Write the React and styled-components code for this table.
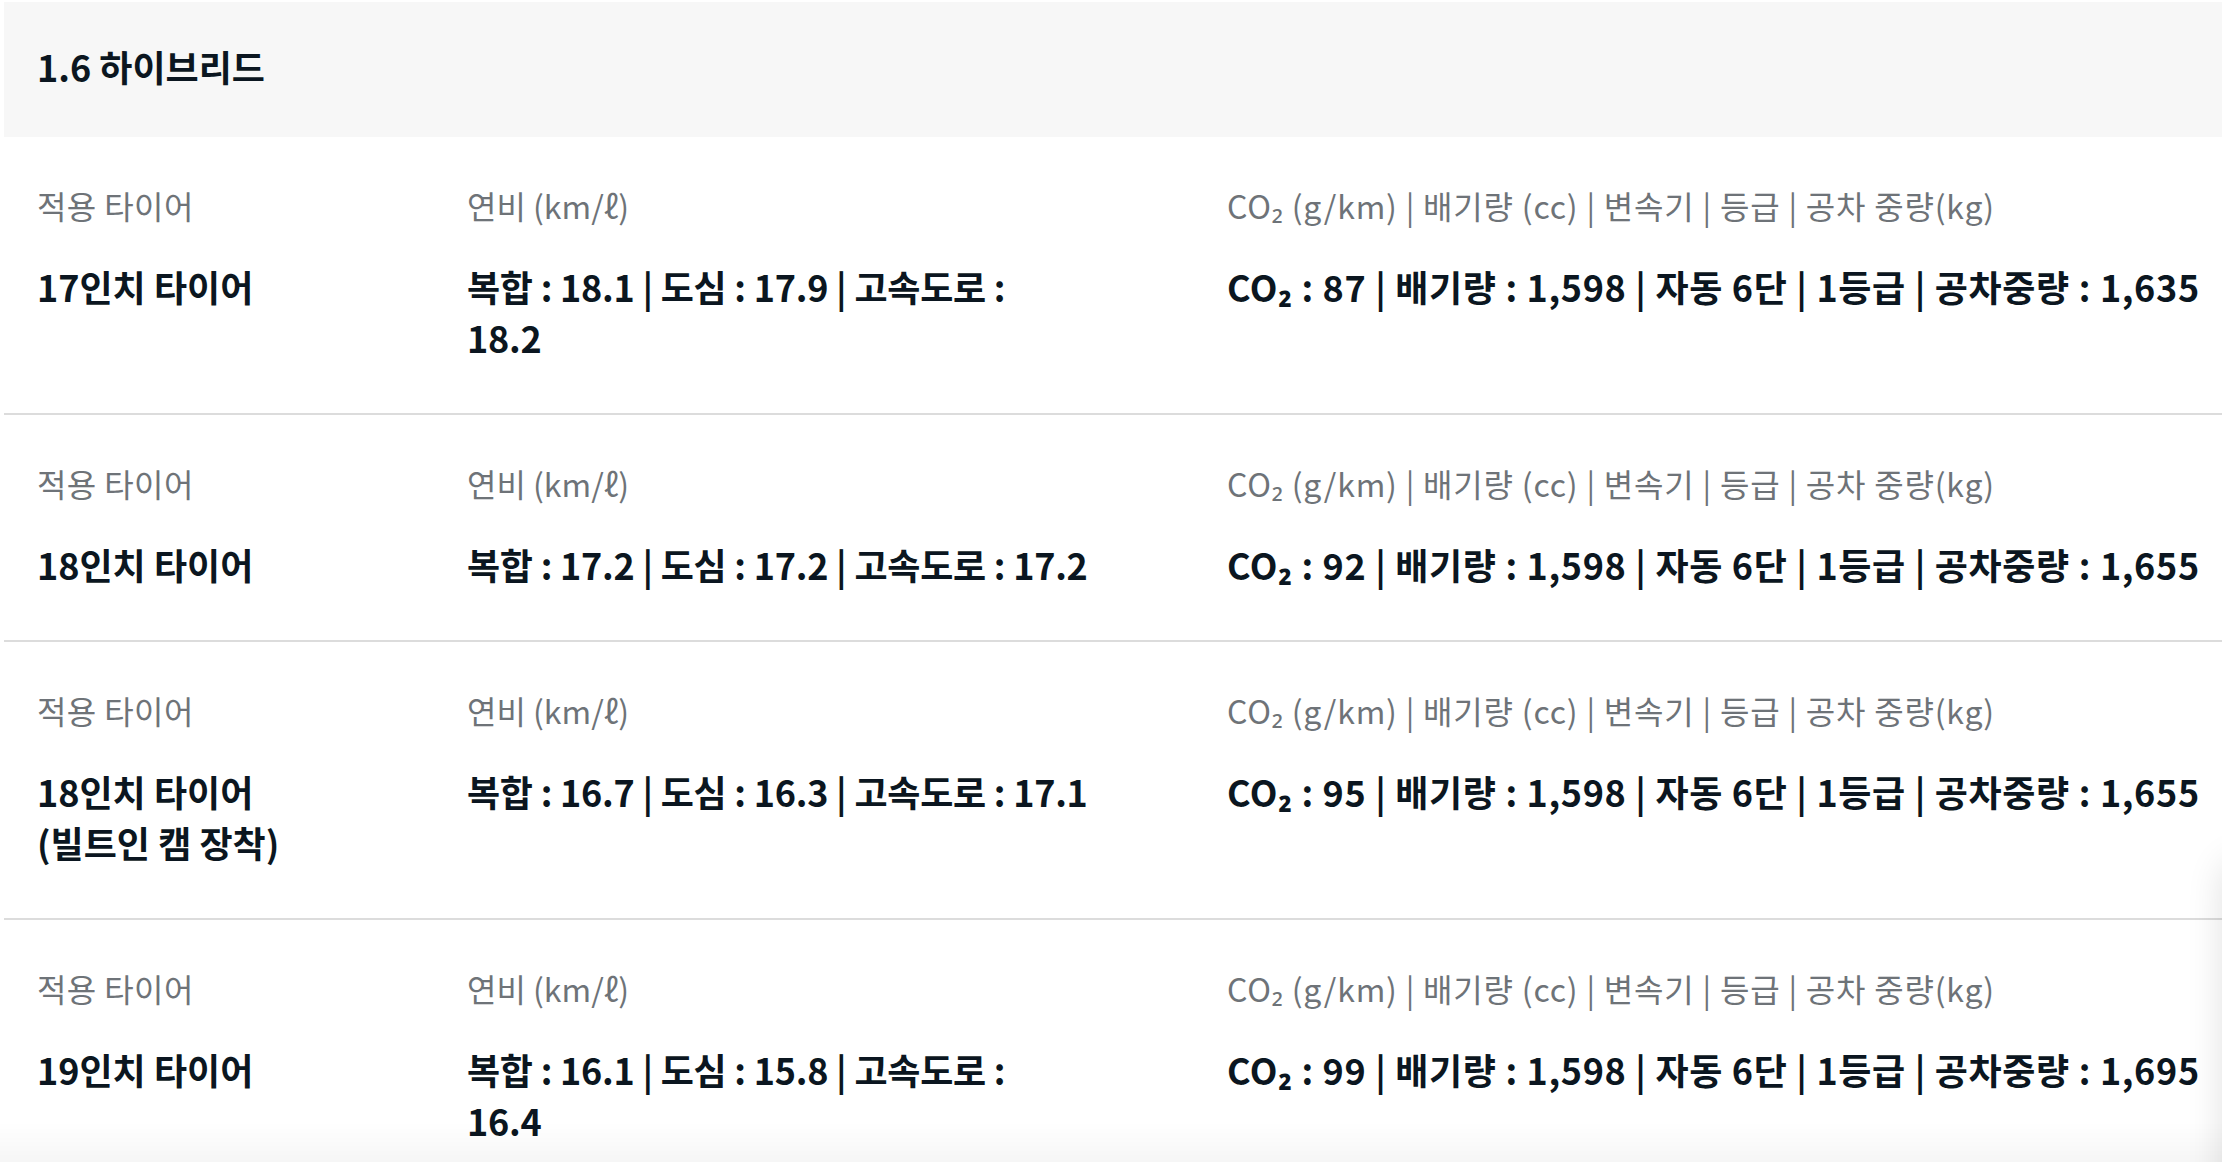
import React from "react";
import styled, { createGlobalStyle } from "styled-components";

const GlobalStyle = createGlobalStyle`
  html, body {
    margin: 0;
    padding: 0;
    background: #ffffff;
    overflow: hidden;
  }
  body {
    font-family: "Noto Sans CJK KR", "Noto Sans", sans-serif;
    color: #0b1620;
  }
`;

const Page = styled.div`
  padding: 2px 0 0 4px;
  height: 1160px;
  overflow: hidden;
`;

const Header = styled.div`
  height: 135px;
  box-sizing: border-box;
  background: #f7f7f7;
  display: flex;
  align-items: center;
  padding: 0 0 8px 33px;
`;

const Title = styled.h2`
  margin: 0;
  font-size: 36px;
  font-weight: 700;
  color: #0b1620;
`;

const Row = styled.div`
  display: grid;
  grid-template-columns: 430px 760px 1fr;
  padding: 46px 0 50px 33px;
  border-bottom: 2px solid #dcdcdc;
`;

const Cell = styled.div`
  display: flex;
  flex-direction: column;
  gap: 33px;
  min-width: 0;
`;

const Label = styled.span`
  font-size: 32px;
  line-height: 45px;
  font-weight: 400;
  letter-spacing: ${({ spacing }) => spacing || "0"};
  color: #6e7378;
  white-space: nowrap;
`;

const Value = styled.p`
  margin: 0;
  font-size: 36px;
  line-height: 51px;
  font-weight: 700;
  letter-spacing: ${({ spacing }) => spacing || "0"};
  color: #0b1620;
  white-space: nowrap;
`;

const BottomFade = styled.div`
  position: fixed;
  left: 0;
  right: 0;
  bottom: 0;
  height: 40px;
  background: linear-gradient(180deg, rgba(0, 0, 0, 0) 0%, rgba(0, 0, 0, 0.035) 100%);
  pointer-events: none;
`;

const EdgeShadow = styled.div`
  position: fixed;
  right: -70px;
  top: 860px;
  width: 70px;
  height: 400px;
  border-radius: 20px;
  background: #ffffff;
  box-shadow: 0 0 36px rgba(0, 0, 0, 0.12);
`;

const rows = [
  {
    tire: ["17인치 타이어"],
    fuel: ["복합 : 18.1 | 도심 : 17.9 | 고속도로 :", "18.2"],
    spec: "CO₂ : 87 | 배기량 : 1,598 | 자동 6단 | 1등급 | 공차중량 : 1,635",
  },
  {
    tire: ["18인치 타이어"],
    fuel: ["복합 : 17.2 | 도심 : 17.2 | 고속도로 : 17.2"],
    spec: "CO₂ : 92 | 배기량 : 1,598 | 자동 6단 | 1등급 | 공차중량 : 1,655",
  },
  {
    tire: ["18인치 타이어", "(빌트인 캠 장착)"],
    fuel: ["복합 : 16.7 | 도심 : 16.3 | 고속도로 : 17.1"],
    spec: "CO₂ : 95 | 배기량 : 1,598 | 자동 6단 | 1등급 | 공차중량 : 1,655",
  },
  {
    tire: ["19인치 타이어"],
    fuel: ["복합 : 16.1 | 도심 : 15.8 | 고속도로 :", "16.4"],
    spec: "CO₂ : 99 | 배기량 : 1,598 | 자동 6단 | 1등급 | 공차중량 : 1,695",
  },
];

function Lines({ lines }) {
  return lines.map((line, i) => (
    <React.Fragment key={i}>
      {i > 0 && <br />}
      {line}
    </React.Fragment>
  ));
}

export default function App() {
  return (
    <>
      <GlobalStyle />
      <Page>
        <Header>
          <Title>1.6 하이브리드</Title>
        </Header>
        {rows.map((row, i) => (
          <Row key={i}>
            <Cell>
              <Label spacing="0.4px">적용 타이어</Label>
              <Value>
                <Lines lines={row.tire} />
              </Value>
            </Cell>
            <Cell>
              <Label>연비 (km/ℓ)</Label>
              <Value spacing="-0.25px">
                <Lines lines={row.fuel} />
              </Value>
            </Cell>
            <Cell>
              <Label spacing="0.8px">CO₂ (g/km) | 배기량 (cc) | 변속기 | 등급 | 공차 중량(kg)</Label>
              <Value spacing="0.65px">{row.spec}</Value>
            </Cell>
          </Row>
        ))}
      </Page>
      <BottomFade />
      <EdgeShadow />
    </>
  );
}
